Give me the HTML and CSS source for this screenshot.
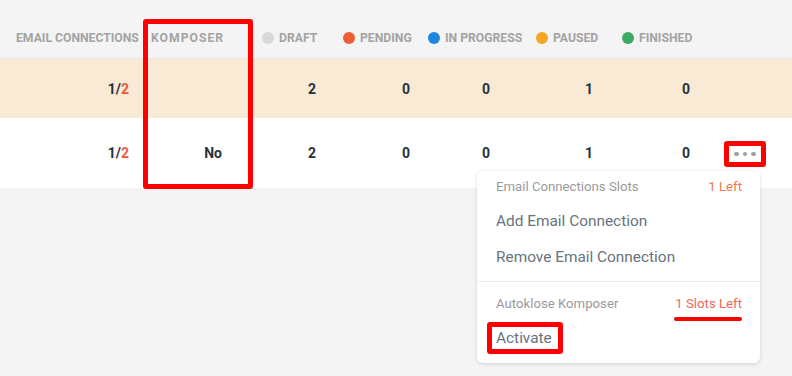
FILE: index.html
```html
<!DOCTYPE html>
<html>
<head>
<meta charset="utf-8">
<link rel="stylesheet" href="styles.css">
</head>
<body>
<div class="table">
  <div class="thead">
    <div class="th">Email Connections</div>
    <div class="th spaced">Komposer</div>
    <div class="th"><span class="dot draft"></span>Draft</div>
    <div class="th"><span class="dot pending"></span>Pending</div>
    <div class="th"><span class="dot progress"></span>In Progress</div>
    <div class="th"><span class="dot paused"></span>Paused</div>
    <div class="th"><span class="dot finished"></span>Finished</div>
    <div class="th"></div>
  </div>
  <div class="row row-hl">
    <div class="td">1/<span class="accent">2</span></div>
    <div class="td"></div>
    <div class="td">2</div>
    <div class="td">0</div>
    <div class="td">0</div>
    <div class="td">1</div>
    <div class="td">0</div>
    <div class="td"></div>
  </div>
  <div class="row row-tall">
    <div class="td">1/<span class="accent">2</span></div>
    <div class="td">No</div>
    <div class="td">2</div>
    <div class="td">0</div>
    <div class="td">0</div>
    <div class="td">1</div>
    <div class="td">0</div>
    <div class="td action">
      <button class="more" type="button"><span></span><span></span><span></span></button>
    </div>
  </div>
  <div class="col-mark"></div>
  <div class="menu">
    <div class="menu-section">
      <div class="menu-label first"><span>Email Connections Slots</span><span class="left">1 Left</span></div>
      <div class="menu-item">Add Email Connection</div>
      <div class="menu-item">Remove Email Connection</div>
    </div>
    <div class="menu-section second">
      <div class="menu-label"><span>Autoklose Komposer</span><span class="left marked">1 Slots Left</span></div>
      <div class="menu-item activate">Activate</div>
    </div>
  </div>
</div>
</body>
</html>
```
FILE: styles.css
```css
* { box-sizing: border-box; }
html, body { margin: 0; padding: 0; }
body {
  background: #f4f4f4;
  font-family: Roboto, "Liberation Sans", sans-serif;
  width: 792px;
  height: 376px;
  overflow: hidden;
}
.table { position: relative; }
.thead, .row {
  display: grid;
  grid-template-columns: 135px 111px 81px 85px 108px 86px 100px 1fr;
  padding-left: 16px;
  align-items: center;
}
.thead {
  height: 59px;
  padding-top: 18px;
  border-bottom: 1px solid #e6e6e6;
}
.th {
  display: flex;
  align-items: center;
  font-size: 12.2px;
  font-weight: 700;
  color: #a3a3a3;
  text-transform: uppercase;
  white-space: nowrap;
}
.th.spaced { letter-spacing: 1px; }
.dot {
  width: 12px;
  height: 12px;
  border-radius: 50%;
  margin-right: 5px;
  flex: none;
}
.draft { background: #d9d9d9; }
.pending { background: #ec5f36; }
.progress { background: #1f86e0; }
.paused { background: #f5a623; }
.finished { background: #3bab63; }
.row {
  height: 59px;
  background: #fff;
}
.row-hl { background: #f9ead6; }
.row-tall { height: 70px; }
.td {
  text-align: right;
  font-size: 14px;
  font-weight: 700;
  color: #27323d;
}
.td:nth-child(1) { padding-right: 22px; }
.td:nth-child(2) { padding-right: 40px; }
.td:nth-child(3) { padding-right: 27px; }
.td:nth-child(4) { padding-right: 18px; }
.td:nth-child(5) { padding-right: 46px; }
.td:nth-child(6) { padding-right: 29px; }
.td:nth-child(7) { padding-right: 32px; }
.accent { color: #ef5a3c; }
.action { text-align: left; padding-top: 2px; }
.more {
  margin-left: 2px;
  width: 42px;
  height: 26px;
  border: 5px solid #ff0000;
  border-radius: 3px;
  background: #fff;
  padding: 0;
  display: flex;
  align-items: center;
  justify-content: center;
  gap: 4px;
}
.more span {
  width: 4.5px;
  height: 4.5px;
  border-radius: 50%;
  background: #a0a0a0;
}
.col-mark {
  position: absolute;
  left: 143px;
  top: 19px;
  width: 110px;
  height: 170px;
  border: 5px solid #ff0000;
  border-radius: 3px;
}
.menu {
  position: absolute;
  left: 477px;
  top: 171px;
  width: 283px;
  height: 192px;
  background: #fff;
  border-radius: 6px;
  box-shadow: 0 1px 4px rgba(0, 0, 0, 0.14);
}
.menu-section { padding: 4px 0 6px; }
.menu-section.second {
  border-top: 1px solid #ececec;
  padding: 10px 0 9px;
}
.menu-label {
  display: flex;
  justify-content: space-between;
  height: 24px;
  line-height: 24px;
  padding: 0 18px 0 19px;
  font-size: 13.2px;
  color: #9a9a9a;
}
.menu-label.first { margin-bottom: 4px; }
.left { color: #f0784c; position: relative; }
.marked { color: #f0665a; }
.marked::after {
  content: "";
  position: absolute;
  left: -1px;
  right: 0;
  bottom: -5px;
  height: 4px;
  border-radius: 2px;
  background: #ff0000;
}
.menu-item {
  height: 36px;
  line-height: 36px;
  padding-left: 19px;
  font-size: 15.4px;
  color: #67737e;
}
.menu-item.activate {
  margin: 6px 0 0 10px;
  height: 32px;
  line-height: 22px;
  width: 76px;
  padding-left: 4px;
  border: 5px solid #ff0000;
  border-radius: 3px;
}
```
